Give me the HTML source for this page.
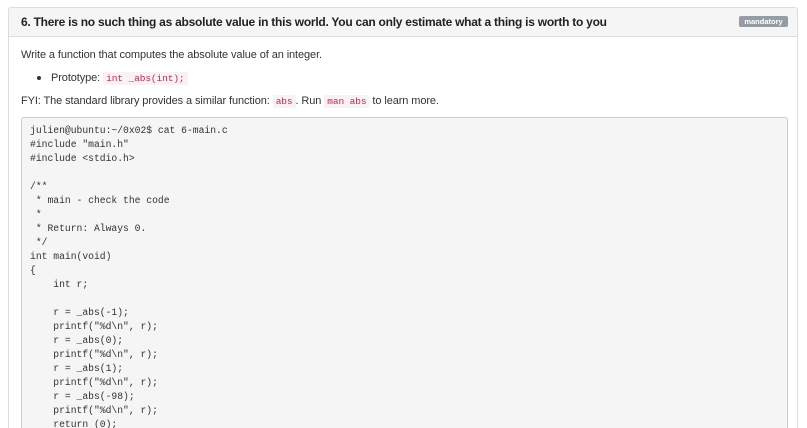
<!DOCTYPE html>
<html><head><style>
html,body{margin:0;height:428px;overflow:hidden}
body{background:#fff;font-family:"Liberation Sans",sans-serif;color:#333;width:807px;position:relative}
.panel{position:absolute;left:8px;top:7px;width:790px;height:421px;border:1px solid #ddd;border-bottom:none;border-radius:3px 3px 0 0;overflow:hidden;box-sizing:border-box}
.head{height:29px;background:#f5f5f5;border-bottom:1px solid #ddd;position:relative;box-sizing:border-box}
.head h3{margin:0;position:absolute;left:12px;top:7px;font-size:12px;font-weight:bold;color:#222;letter-spacing:-0.25px}
.badge{position:absolute;left:730px;top:8px;width:49px;height:11px;background:#959ca5;color:#fff;font-size:7.5px;font-weight:bold;border-radius:2px;text-align:center;line-height:11px}
p,li{font-size:11px;margin:0;position:absolute;letter-spacing:-0.1px}
code{font-family:"Liberation Mono",monospace;color:#c7254e;background:#f9f2f4;font-size:9.5px;padding:1px 3px;border-radius:2px}
pre{position:absolute;left:12px;top:109px;width:757px;height:320px;margin:0;background:#f5f5f5;border:1px solid #ccc;border-bottom:none;border-radius:3px 3px 0 0;font-family:"Liberation Mono",monospace;font-size:9.7px;line-height:14px;color:#333;padding:6px 0 0 8px;overflow:hidden}
.dot{position:absolute;left:28px;top:68px;width:4px;height:4px;border-radius:50%;background:#333}
</style></head><body>
<div class="panel">
<div class="head"><h3>6. There is no such thing as absolute value in this world. You can only estimate what a thing is worth to you</h3><div class="badge">mandatory</div></div>
<p style="left:12px;top:41px">Write a function that computes the absolute value of an integer.</p>
<div class="dot"></div>
<p style="left:42px;top:64px">Prototype: <code>int _abs(int);</code></p>
<p style="left:12px;top:87px">FYI: The standard library provides a similar function: <code>abs</code>. Run <code>man abs</code> to learn more.</p>
<pre>julien@ubuntu:~/0x02$ cat 6-main.c
#include "main.h"
#include &lt;stdio.h&gt;

/**
 * main - check the code
 *
 * Return: Always 0.
 */
int main(void)
{
    int r;

    r = _abs(-1);
    printf("%d\n", r);
    r = _abs(0);
    printf("%d\n", r);
    r = _abs(1);
    printf("%d\n", r);
    r = _abs(-98);
    printf("%d\n", r);
    return (0);
}</pre>
</div>
</body></html>
